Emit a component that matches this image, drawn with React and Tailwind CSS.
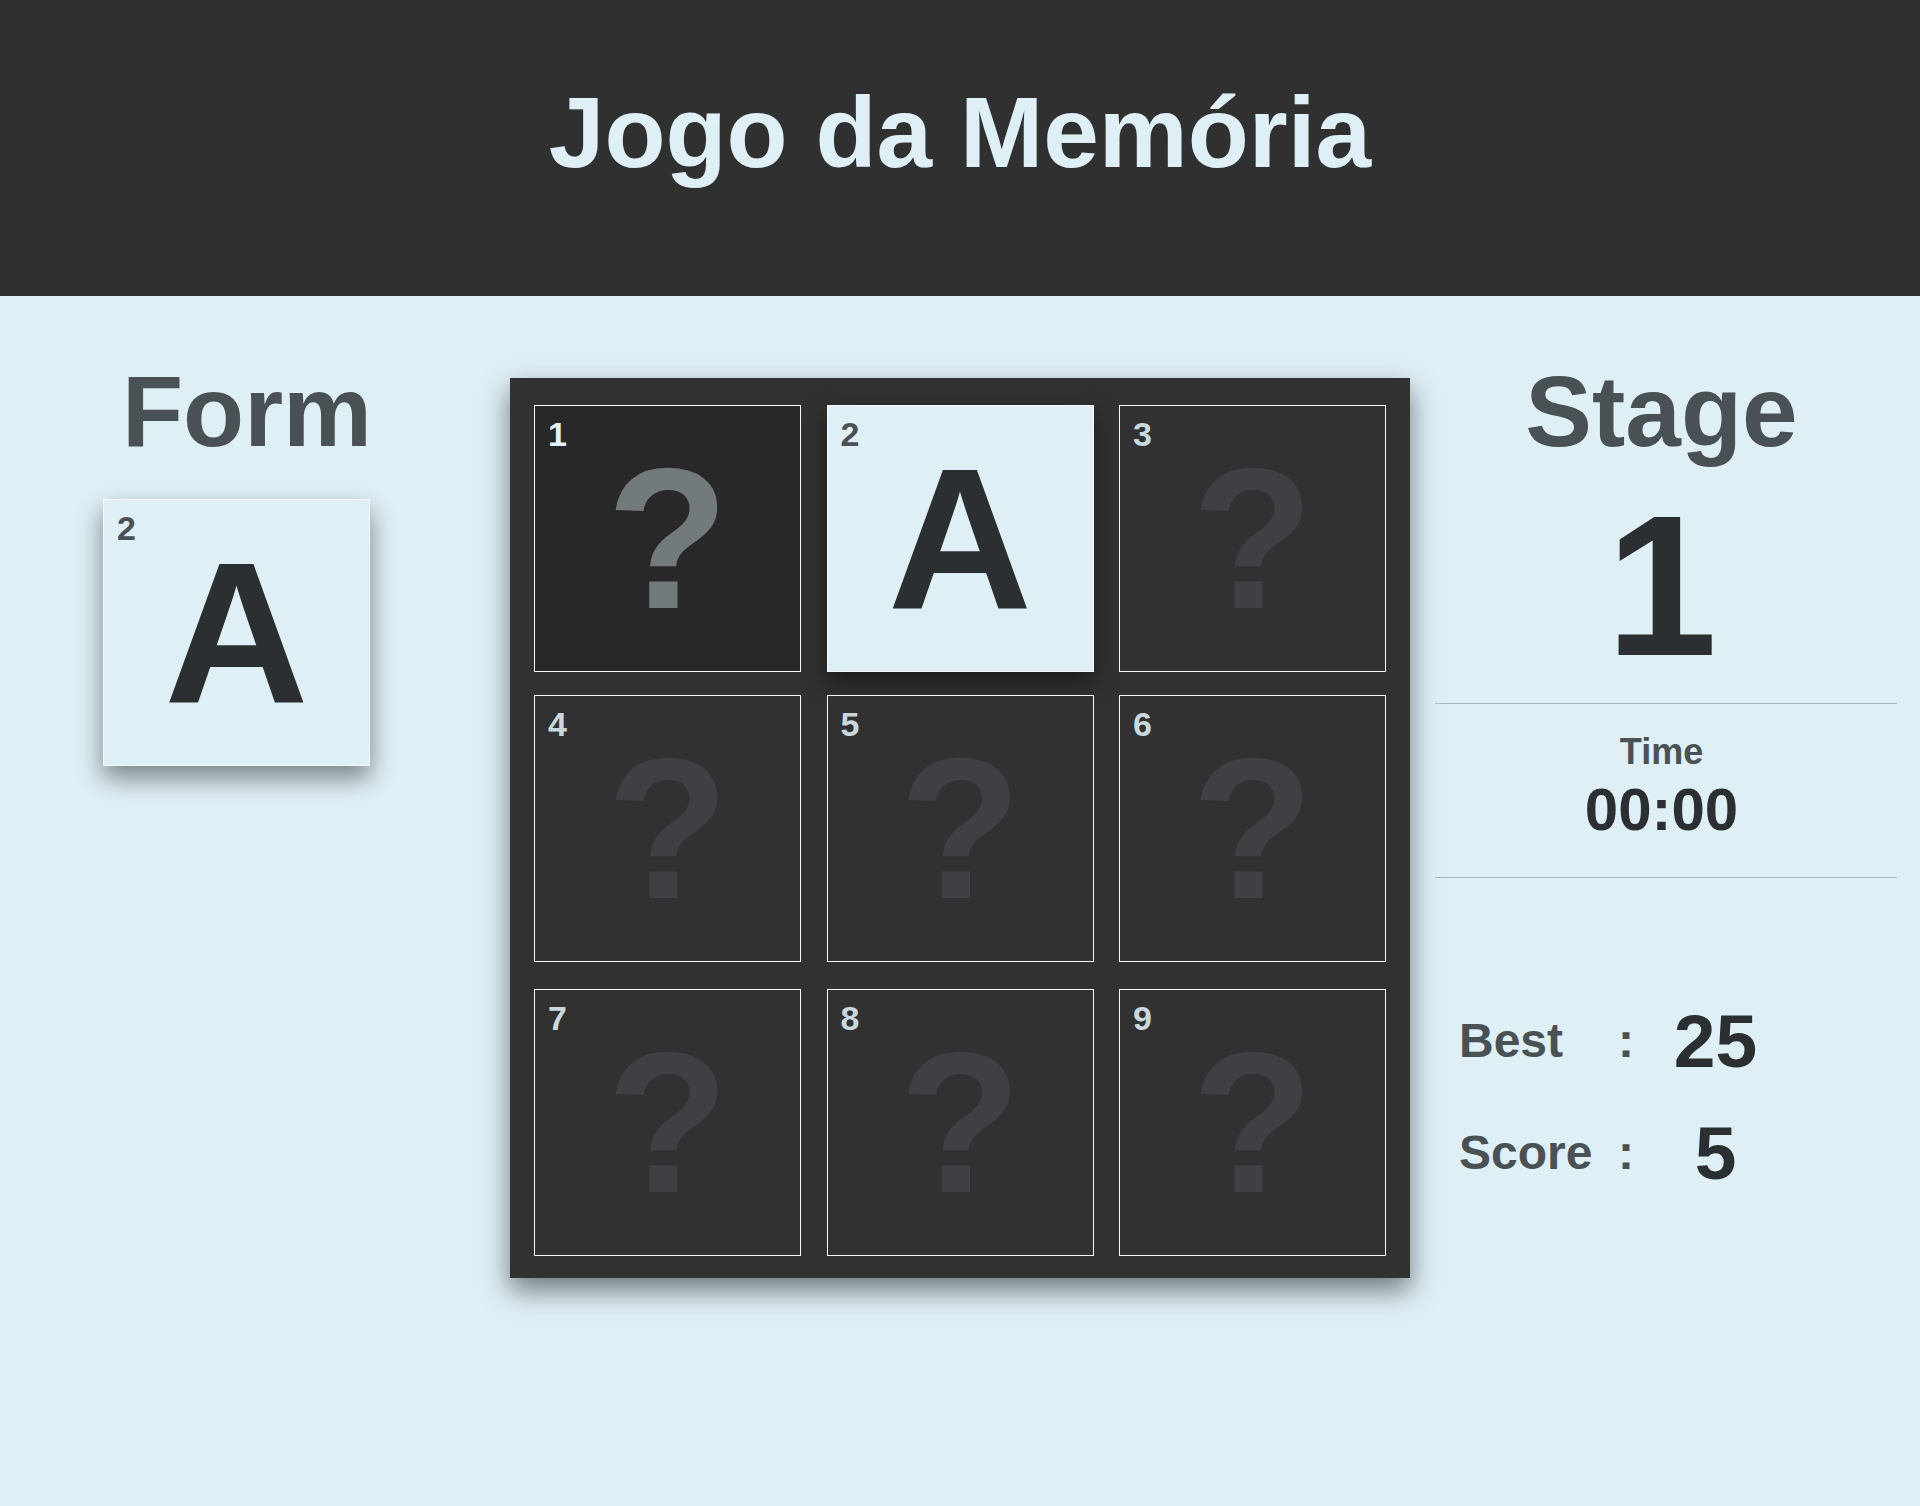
import React from 'react'

const FONT = { fontFamily: '"Liberation Sans", Arial, sans-serif' }

const cards = [
  { n: 1, state: 'hover' },
  { n: 2, state: 'open', letter: 'A' },
  { n: 3 },
  { n: 4 },
  { n: 5 },
  { n: 6 },
  { n: 7 },
  { n: 8 },
  { n: 9 },
]

function OpenCard({ n, letter, className = '' }) {
  return (
    <div
      className={
        'relative w-[267px] h-[267px] border border-[#f4fafc] bg-[#deeff5] flex items-center justify-center ' +
        className
      }
    >
      <span className="absolute left-[13px] top-[11px] text-[34px] leading-none font-bold text-[#495154]">{n}</span>
      <span className="text-[200px] leading-none font-bold text-[#2b2f32]">{letter}</span>
    </div>
  )
}

function Card({ n, state, letter }) {
  if (state === 'open') {
    return <OpenCard n={n} letter={letter} className="shadow-[0_10px_22px_rgba(0,0,0,0.45)]" />
  }
  const hover = state === 'hover'
  return (
    <div
      className={
        'relative w-[267px] h-[267px] border border-[#f4fafc] flex items-center justify-center ' +
        (hover ? 'bg-[#282828]' : 'bg-[#313131]')
      }
    >
      <span
        className={
          'absolute left-[13px] top-[11px] text-[34px] leading-none font-bold ' +
          (hover ? 'text-[#e2f3f9]' : 'text-[#c8d8dd]')
        }
      >
        {n}
      </span>
      <span className={'text-[200px] leading-none font-bold ' + (hover ? 'text-[#737a7c]' : 'text-[#3e4043]')}>?</span>
    </div>
  )
}

function Board() {
  const rows = [cards.slice(0, 3), cards.slice(3, 6), cards.slice(6, 9)]
  const rowMargins = ['mt-[27px]', 'mt-[23px]', 'mt-[27px]']
  return (
    <div className="w-[900px] h-[900px] mt-[82px] bg-[#313131] shadow-[0_12px_26px_rgba(0,0,0,0.5)] flex flex-col">
      {rows.map((row, i) => (
        <div key={i} className={'flex justify-between px-[24px] ' + rowMargins[i]}>
          {row.map((c) => (
            <Card key={c.n} {...c} />
          ))}
        </div>
      ))}
    </div>
  )
}

function StatRow({ label, value }) {
  return (
    <div className="flex items-center h-[112px] pl-[49px]">
      <span className="w-[151px] text-[48px] leading-none font-bold text-[#495154]">{label}</span>
      <span className="w-[32px] text-center text-[48px] leading-none font-bold text-[#495154]">:</span>
      <span className="w-[147px] text-center text-[75px] leading-none font-bold text-[#2b2f32]">{value}</span>
    </div>
  )
}

export default function App() {
  return (
    <div className="min-h-screen bg-[#deeff5]" style={FONT}>
      <header className="h-[296px] bg-[#303030] pt-[82px]">
        <h1 className="text-center text-[100px] leading-[100px] font-bold text-[#def0f6]">Jogo da Memória</h1>
      </header>

      <main className="flex">
        <section className="w-[510px] flex flex-col">
          <h2 className="w-[494px] mt-[65px] text-center text-[100px] leading-[100px] font-bold text-[#495154]">Form</h2>
          <div className="ml-[103px] mt-[38px]">
            <OpenCard n={2} letter="A" className="shadow-[0_12px_24px_rgba(0,0,0,0.45)]" />
          </div>
        </section>

        <Board />

        <section className="w-[510px] flex flex-col">
          <h2 className="mt-[65px] pr-[7px] text-center text-[100px] leading-[100px] font-bold text-[#495154]">Stage</h2>
          <div className="mt-[25px] pr-[7px] text-center text-[200px] leading-[200px] font-bold text-[#2b2f32]">1</div>
          <div className="mt-[17px] ml-[25px] mr-[23px] border-t border-[#a7b9c0]" />
          <div className="mt-[30px] pr-[7px] text-center text-[36px] leading-[36px] font-bold text-[#495154]">Time</div>
          <div className="mt-[10px] pr-[7px] text-center text-[60px] leading-[60px] font-bold text-[#2b2f32]">00:00</div>
          <div className="mt-[37px] ml-[25px] mr-[23px] border-t border-[#a7b9c0]" />
          <div className="mt-[107px]">
            <StatRow label="Best" value="25" />
            <StatRow label="Score" value="5" />
          </div>
        </section>
      </main>
    </div>
  )
}
